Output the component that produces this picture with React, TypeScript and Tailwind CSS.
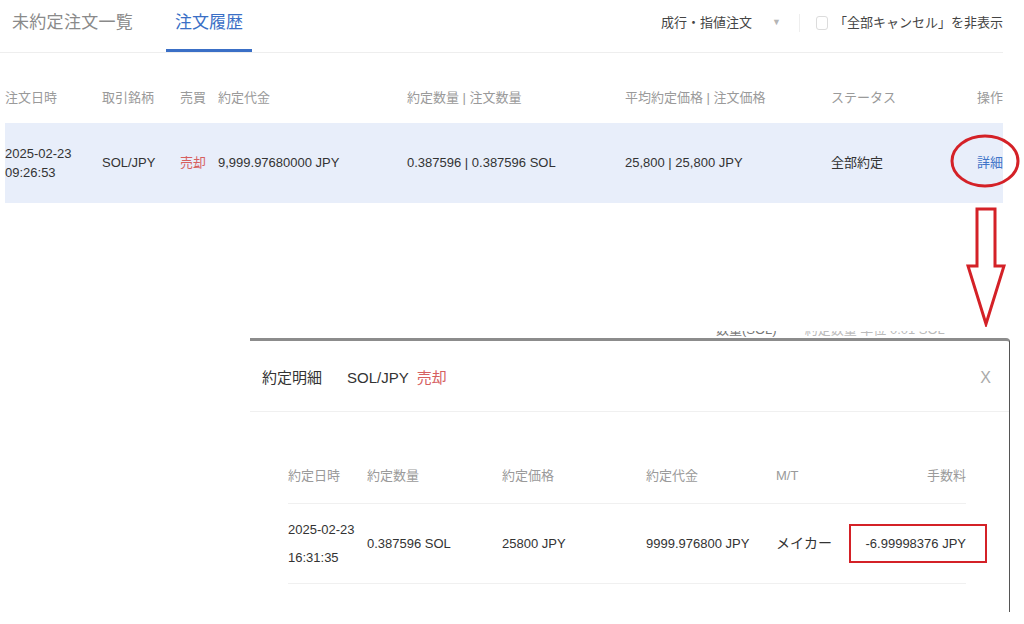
import React from "react";

const font = { fontFamily: '"Liberation Sans", "Noto Sans CJK JP", sans-serif' };

const headCols = "grid grid-cols-[97px_78px_38px_189px_218px_206px_1fr_auto]";
const fillCols = "grid grid-cols-[79px_135px_144px_130px_1fr_auto]";

export default function App() {
  return (
    <div className="w-[1024px] h-[624px] bg-white overflow-hidden text-[#333]" style={font}>
      <div className="w-[1003px]">
        {/* Tabs + filters */}
        <div className="flex items-end justify-between h-[53px] border-b border-[#eeeeee]">
          <div className="flex h-full">
            <div className="ml-[12px] h-full flex items-center pb-[4px] border-b-[3px] border-transparent text-[17px] tracking-[0.3px] text-[#8a8a8a]">
              未約定注文一覧
            </div>
            <div className="ml-[33px] px-[9px] h-full flex items-center pb-[4px] border-b-[3px] border-[#3a6fc6] text-[17px] text-[#3a6fc6]">
              注文履歴
            </div>
          </div>
          <div className="h-full flex items-center pb-[7px] text-[13px] text-[#444]">
            <span>成行・指値注文</span>
            <span className="ml-[20px] text-[9px] text-[#b5b5b5]">▼</span>
            <span className="ml-[18px] w-px h-[18px] bg-[#eeeeee]" />
            <span className="ml-[16px] w-[12px] h-[14px] rounded-[3px] border border-[#dcdcdc]" />
            <span className="ml-[6px]">「全部キャンセル」を非表示</span>
          </div>
        </div>

        {/* Order history table */}
        <div className="ml-[5px] mt-[20px] text-[13px]">
          <div className={`${headCols} h-[50px] items-center text-[#9a9a9a]`}>
            <span>注文日時</span>
            <span>取引銘柄</span>
            <span>売買</span>
            <span>約定代金</span>
            <span>約定数量 | 注文数量</span>
            <span>平均約定価格 | 注文価格</span>
            <span>ステータス</span>
            <span className="text-right">操作</span>
          </div>
          <div className={`${headCols} h-[80px] items-center bg-[#e8eefa]`}>
            <span className="leading-[19px]">
              2025-02-23
              <br />
              09:26:53
            </span>
            <span>SOL/JPY</span>
            <span className="text-[#d6605f]">売却</span>
            <span>9,999.97680000 JPY</span>
            <span>0.387596 | 0.387596 SOL</span>
            <span>25,800 | 25,800 JPY</span>
            <span>全部約定</span>
            <span className="relative text-[#3f74c8]">
              詳細
              <svg className="absolute left-[-27px] top-[-19px]" width="72" height="56" viewBox="0 0 72 56">
                <ellipse cx="35" cy="27" rx="33" ry="25" fill="none" stroke="#d42127" strokeWidth="3" />
              </svg>
            </span>
          </div>
        </div>

        {/* Arrow down to the detail dialog */}
        <div className="flex justify-end mt-[4px] mr-[-3px]">
          <svg width="40" height="120" viewBox="0 0 40 120">
            <polygon
              points="11,2 29,2 29,59 38,59 20,117 2,59 11,59"
              fill="#fff"
              stroke="#d42127"
              strokeWidth="3"
              strokeLinejoin="miter"
            />
          </svg>
        </div>
      </div>

      {/* Page content peeking above the dialog */}
      <div className="h-[7px] overflow-hidden flex text-[13px] leading-[16px] text-[#777] mt-[4px]">
        <span className="ml-[716px] mt-[-9px]">数量(SOL)</span>
        <span className="ml-[28px] mt-[-9px] text-[#bbb]">約定数量 単位 0.01 SOL</span>
      </div>

      {/* Fill detail dialog */}
      <div className="ml-[250px] w-[760px] h-[274px] border-t-[3px] border-t-[#8c8c8c] border-r-[1.5px] border-r-[#555] rounded-tr-[4px] bg-white">
        <div className="h-[71px] flex items-center justify-between pl-[12px] pr-[18px] border-b border-[#f0f0f0]">
          <div className="flex items-center text-[15px] pt-[4px]">
            <span className="text-[#333]">約定明細</span>
            <span className="ml-[25px]">SOL/JPY</span>
            <span className="ml-[8px] text-[#d6605f]">売却</span>
          </div>
          <span className="text-[16px] text-[#aaa] pt-[4px]">X</span>
        </div>

        <div className="ml-[38px] mr-[43px] mt-[41px] text-[13px]">
          <div className={`${fillCols} h-[51px] items-center pb-[4px] border-b border-[#f0f0f0] text-[#9a9a9a]`}>
            <span>約定日時</span>
            <span>約定数量</span>
            <span>約定価格</span>
            <span>約定代金</span>
            <span>M/T</span>
            <span className="text-right">手数料</span>
          </div>
          <div className={`${fillCols} h-[80px] items-center border-b border-[#f0f0f0]`}>
            <span className="leading-[28px]">
              2025-02-23
              <br />
              16:31:35
            </span>
            <span>0.387596 SOL</span>
            <span>25800 JPY</span>
            <span>9999.976800 JPY</span>
            <span className="text-[14px]">メイカー</span>
            <span className="relative text-right">
              -6.99998376 JPY
              <span className="absolute left-[-17px] right-[-21px] top-[-10px] bottom-[-10px] border-2 border-[#d42127]" />
            </span>
          </div>
        </div>
      </div>
    </div>
  );
}
